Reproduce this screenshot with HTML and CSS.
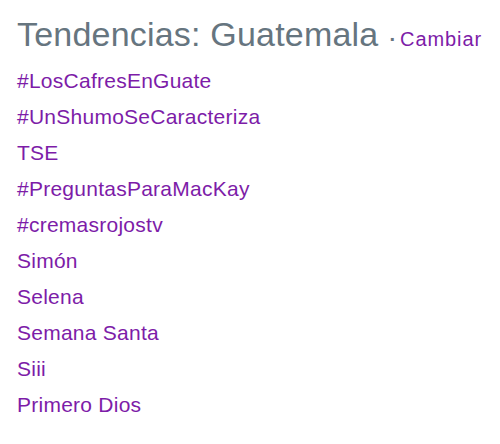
FILE: index.html
```html
<!DOCTYPE html>
<html lang="es">
<head>
<meta charset="utf-8">
<link rel="stylesheet" href="styles.css">
</head>
<body>
<div class="trends">
  <div class="header">
    <h3 class="title">Tendencias: Guatemala</h3>
    <span class="sep">·</span>
    <a class="change" href="#">Cambiar</a>
  </div>
  <ul class="list">
    <li><a href="#">#LosCafresEnGuate</a></li>
    <li><a href="#">#UnShumoSeCaracteriza</a></li>
    <li><a href="#">TSE</a></li>
    <li><a href="#">#PreguntasParaMacKay</a></li>
    <li><a href="#">#cremasrojostv</a></li>
    <li><a href="#">Simón</a></li>
    <li><a href="#">Selena</a></li>
    <li><a href="#">Semana Santa</a></li>
    <li><a href="#">Siii</a></li>
    <li><a href="#">Primero Dios</a></li>
  </ul>
</div>
</body>
</html>
```
FILE: styles.css
```css
html, body {
  margin: 0;
  padding: 0;
  background: #ffffff;
  font-family: "Liberation Sans", Arial, sans-serif;
}
.trends {
  padding: 14px 0 0 17px;
}
.header {
  display: flex;
  align-items: baseline;
  height: 49px;
}
.title {
  margin: 0;
  font-size: 34px;
  font-weight: normal;
  letter-spacing: 0.2px;
  color: #66757f;
  line-height: 40px;
}
.sep {
  margin-left: 11px;
  font-size: 20px;
  font-weight: bold;
  color: #66757f;
}
.change {
  margin-left: 4px;
  font-size: 20px;
  letter-spacing: 0.9px;
  color: #7d1ca8;
  text-decoration: none;
}
.list {
  list-style: none;
  margin: 0;
  padding: 0;
}
.list li {
  line-height: 36px;
  font-size: 21px;
  letter-spacing: 0.25px;
}
.list a {
  color: #7d1ca8;
  text-decoration: none;
}
```
